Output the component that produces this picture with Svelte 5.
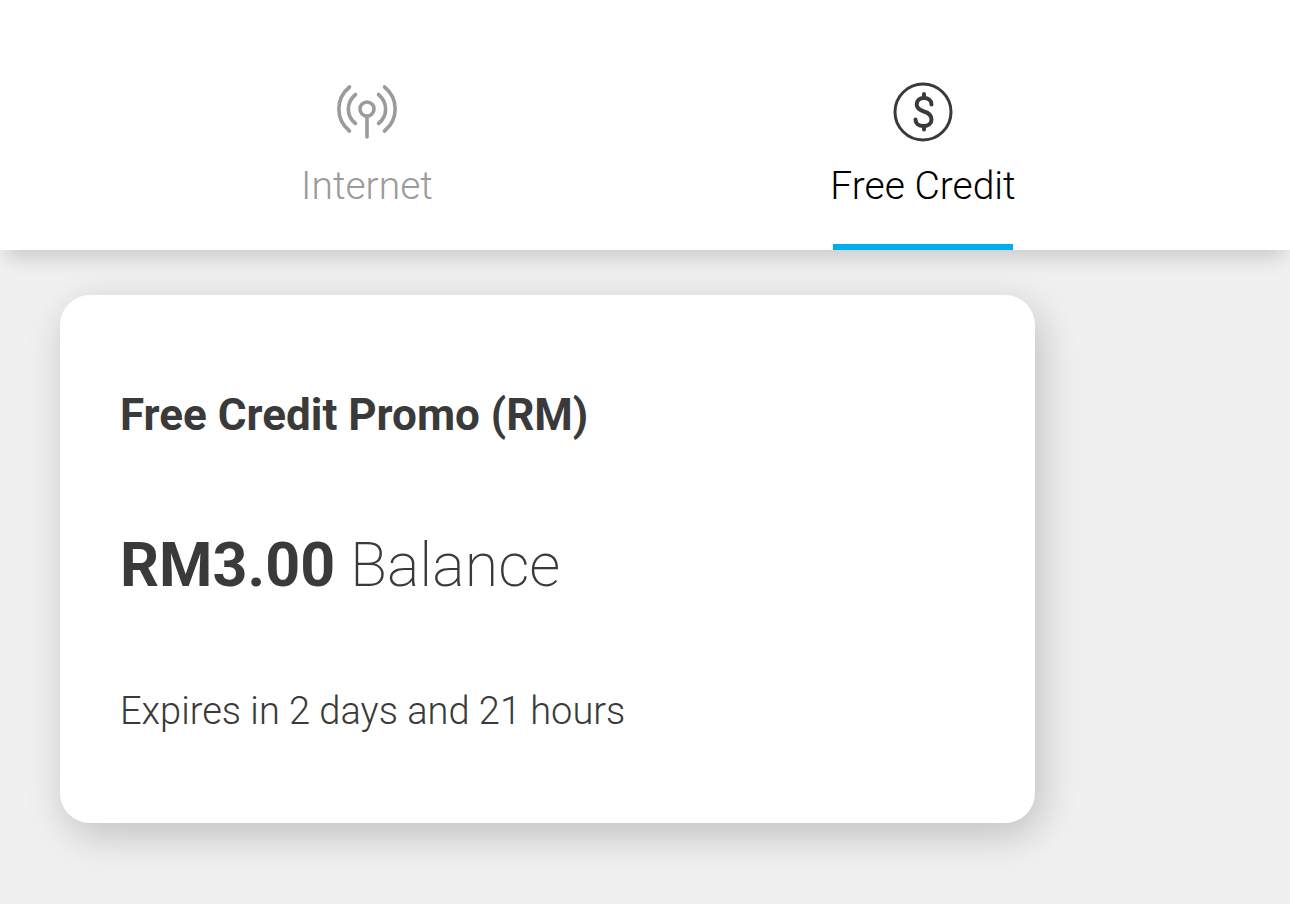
<script>
  let active = $state('credit');
</script>

<div class="page">
  <nav class="tabs" aria-label="Balances">
    <button class="tab" class:active={active === 'internet'} onclick={() => (active = 'internet')}>
      <svg class="icon" viewBox="0 0 64 64" fill="none" stroke="currentColor" stroke-width="3.6" stroke-linecap="round" aria-hidden="true">
        <circle cx="32" cy="29" r="7" />
        <path d="M32 36.5V57" />
        <path d="M20.5 14.5C11 22.5 11 36 20.5 43.5M43.500 14.500C53 22.500 53 36 43.500 43.500" />
        <path d="M14.500 7C0.300 18.500 0.300 39.500 14.500 51M49.500 7C63.700 18.500 63.700 39.500 49.500 51" />
      </svg>
      <span class="label">Internet</span>
    </button>
    <button class="tab" class:active={active === 'credit'} onclick={() => (active = 'credit')}>
      <svg class="icon" viewBox="0 0 64 64" fill="none" stroke="currentColor" stroke-linecap="round" aria-hidden="true">
        <circle cx="32" cy="32" r="28" stroke-width="3" />
        <path stroke-width="4" d="M33 14V18M33 46V49.500" />
        <path stroke-width="4" d="M40.500 24.500C40.500 20.500 37.500 18 33 18C28.500 18 25.700 20.500 25.700 24.500C25.700 28.500 28.500 30 33 31.500C38 33 40.500 35 40.500 39.500C40.500 43.500 37.500 46 32.500 46C27.500 46 24.500 43.500 24.500 39.500" />
      </svg>
      <span class="label">Free Credit</span>
    </button>
  </nav>

  <main class="content">
    <article class="card">
      <h2>Free Credit Promo (RM)</h2>
      <p class="balance"><strong>RM3.00</strong> Balance</p>
      <p class="expiry">Expires in 2 days and 21 hours</p>
    </article>
  </main>
</div>

<style>
  :global(body) {
    margin: 0;
    background: #f0f0f0;
  }

  .page {
    min-height: 100vh;
    background: #f0f0f0;
    color: #3a3a3a;
    font-family: Roboto, 'Liberation Sans', sans-serif;
    overflow-x: hidden;
  }

  .tabs {
    display: flex;
    padding: 80px 89px 0;
    background: #fff;
    box-shadow: 0 14px 18px -6px rgba(0, 0, 0, 0.15);
  }

  .tab {
    flex: 1;
    display: flex;
    flex-direction: column;
    align-items: center;
    gap: 16px;
    padding: 0;
    border: 0;
    background: none;
    color: #9b9b9b;
    font-family: inherit;
    font-size: 39px;
    font-weight: 350;
    line-height: 52px;
    cursor: pointer;
  }

  .tab::after {
    content: '';
    width: 180px;
    height: 6px;
    margin-top: 16px;
  }

  .icon {
    width: 64px;
    height: 64px;
  }

  .active .icon {
    color: #3a3a3a;
  }

  .active {
    color: #000;
  }

  .active::after {
    background: #00aeef;
  }

  .content {
    padding: 45px 255px 80px 60px;
  }

  .card {
    padding: 90px 60px 86px;
    border-radius: 30px;
    background: #fff;
    box-shadow: 6px 12px 40px rgba(0, 0, 0, 0.2);
  }

  h2,
  p {
    margin: 0;
  }

  h2 {
    font-size: 44px;
    font-weight: 700;
    line-height: 60px;
  }

  .balance {
    margin-top: 80px;
    font-size: 61px;
    font-weight: 200;
    line-height: 80px;
  }

  .balance strong {
    font-weight: 700;
  }

  .expiry {
    margin-top: 80px;
    font-size: 38px;
    font-weight: 350;
    line-height: 52px;
  }
</style>
